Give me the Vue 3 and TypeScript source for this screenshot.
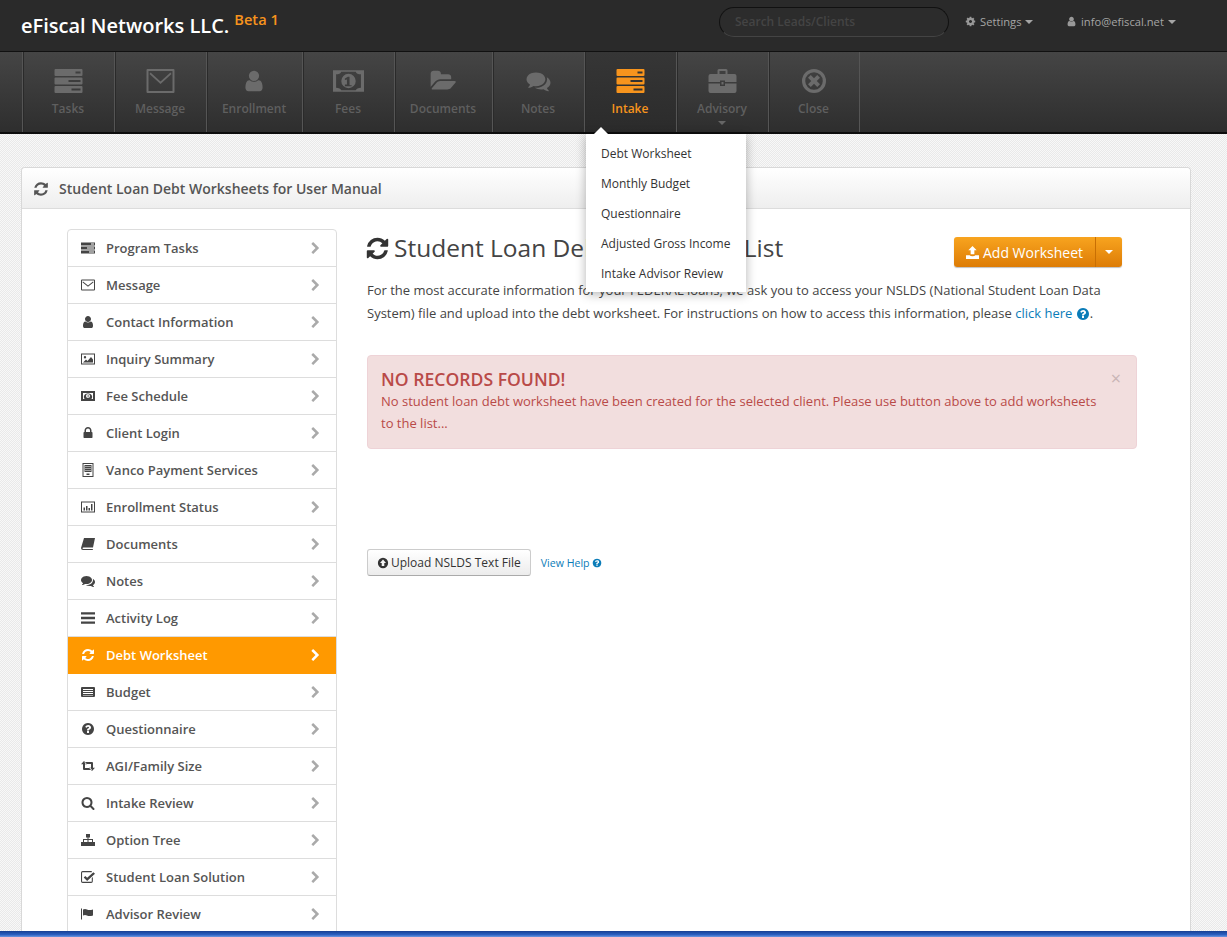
<script setup lang="ts">
interface Glyph { box: string; d: string }

const fa = '0 0 1792 1792'
const refresh = 'M1639 1056q0 5-1 7-64 268-268 434.5t-478 166.5q-146 0-282.5-55t-243.5-157l-129 129q-19 19-45 19t-45-19-19-45v-448q0-26 19-45t45-19h448q26 0 45 19t19 45-19 45l-137 137q71 66 161 102t187 36q134 0 250-65t186-179q11-17 53-117 8-23 30-23h192q13 0 22.5 9.5t9.5 22.5zm25-800v448q0 26-19 45t-45 19h-448q-26 0-45-19t-19-45 19-45l138-138q-148-137-349-137-134 0-250 65t-186 179q-11 17-53 117-8 23-30 23h-199q-13 0-22.5-9.5t-9.5-22.5v-7q65-268 270-434.5t480-166.5q146 0 284 55.5t245 156.5l130-129q19-19 45-19t45 19 19 45z'
const user = 'M1536 1399q0 109-62.5 187t-150.5 78h-854q-88 0-150.5-78t-62.5-187q0-85 8.5-160.5t31.5-152 58.5-131 94-89 134.5-34.5q131 128 313 128t313-128q76 0 134.5 34.5t94 89 58.5 131 31.5 152 8.5 160.5zm-256-887q0 159-112.5 271.5t-271.5 112.5-271.5-112.5-112.5-271.5 112.5-271.5 271.5-112.5 271.5 112.5 112.5 271.5z'
const question = 'M1024 1376v-192q0-14-9-23t-23-9h-192q-14 0-23 9t-9 23v192q0 14 9 23t23 9h192q14 0 23-9t9-23zm256-672q0-88-55.5-163t-138.5-116-170-41q-243 0-371 213-15 24 8 42l132 100q7 6 19 6 16 0 25-12 53-68 86-92 34-24 86-24 48 0 85.5 26t37.5 59q0 38-20 61t-68 45q-63 28-115.5 86.5t-52.5 125.5v36q0 14 9 23t23 9h192q14 0 23-9t9-23q0-19 21.5-49.5t54.5-49.5q32-18 49-28.5t46-35 44.5-48 28-60.5 12.5-81zm384 192q0 209-103 385.5t-279.5 279.5-385.5 103-385.5-103-279.5-279.5-103-385.5 103-385.5 279.5-279.5 385.5-103 385.5 103 279.5 279.5 103 385.5z'

const glyphs: Record<string, Glyph> = {
  server: { box: '0 0 28 24', d: 'M1 0h26a1 1 0 0 1 1 1v5a1 1 0 0 1-1 1H1a1 1 0 0 1-1-1V1a1 1 0 0 1 1-1zM21 2.5v2h5v-2zM1 8.500h26a1 1 0 0 1 1 1v5a1 1 0 0 1-1 1H1a1 1 0 0 1-1-1v-5a1 1 0 0 1 1-1zM14 11v2h12v-2zM1 17h26a1 1 0 0 1 1 1v5a1 1 0 0 1-1 1H1a1 1 0 0 1-1-1v-5a1 1 0 0 1 1-1zM17 19.500v2h9v-2z' },
  envelope: { box: '0 0 28 24', d: 'M1 0h26a1 1 0 0 1 1 1v22a1 1 0 0 1-1 1H1a1 1 0 0 1-1-1V1a1 1 0 0 1 1-1zM2 2v20h24V2zM4 3.500L14 12.500 24 3.500 25 5 14 15 3 5z' },
  user: { box: fa, d: user },
  bill: { box: '0 0 30 21', d: 'M0 0h30v21H0zM3 4v13q4 0 5 2.500h14q1-2.500 5-2.500V4q-4 0-5-2.500H8Q7 4 3 4zM15 3.500a7 7 0 1 1 0 14 7 7 0 0 1 0-14zM14.500 6.500l-3 1.500v1.500l2-.5v5h-2v1.500h6.500V14.500h-2v-8z' },
  folder: { box: '0 0 1920 1792', d: 'M1879 952q0 31-31 66l-336 396q-43 51-120.500 86.500t-143.500 35.500h-1088q-34 0-60.500-13t-26.500-43q0-31 31-66l336-396q43-51 120.500-86.500t143.500-35.500h1088q34 0 60.500 13t26.500 43zm-343-344v160h-832q-94 0-197 47.500t-164 119.500l-337 396-5 6q0-4-.5-12.500t-.5-12.500v-960q0-92 66-158t158-66h320q92 0 158 66t66 158v32h544q92 0 158 66t66 158z' },
  comments: { box: fa, d: 'M1408 768q0 139-94 257t-256.500 186.500-353.500 68.500q-86 0-176-16-124 88-278 128-36 9-86 16h-3q-11 0-20.500-8t-11.500-21q-1-3-1-6.500t.5-6.500 2-6l2.500-5 3.500-5.500 4-5 4.500-5 4-4.500q5-6 23-25t26-29.500 22.500-29 25-38.500 20.500-44q-124-72-195-177t-71-224q0-139 94-257t256.500-186.500 353.500-68.500 353.500 68.500 256.500 186.500 94 257zm384 256q0 120-71 224.500t-195 176.500q10 24 20.500 44t25 38.500 22.500 29 26 29.500 23 25q1 1 4 4.500t4.500 5 4 5 3.500 5.500l2.500 5 2 6 .5 6.500-1 6.500q-3 14-13 22t-22 7q-50-7-86-16-154-40-278-128-90 16-176 16-271 0-472-132 58 4 88 4 161 0 309-45t264-129q125-92 192-212t67-254q0-77-23-152 129 71 204 178t75 230z' },
  briefcase: { box: '0 0 28 24', d: 'M9 5V1.500A1.500 1.500 0 0 1 10.500 0h7A1.500 1.500 0 0 1 19 1.500V5h-2V2h-6v3zM2 5h24a2 2 0 0 1 2 2v6H16.500v-1.500h-5V13H0V7a2 2 0 0 1 2-2zM0 14.500h11.500v2.500h5v-2.500H28V22a2 2 0 0 1-2 2H2a2 2 0 0 1-2-2zM13 13h2v2.500h-2z' },
  closeRing: { box: '0 0 26 26', d: 'M13 0a13 13 0 1 1 0 26 13 13 0 0 1 0-26zM13 3.500a9.500 9.500 0 1 0 0 19 9.500 9.500 0 0 0 0-19zM9.500 6.500L13 10l3.500-3.500 3 3L16 13l3.500 3.500-3 3L13 16l-3.500 3.500-3-3L10 13 6.500 9.500z' },
  refresh: { box: fa, d: refresh },
  chevron: { box: fa, d: 'M1363 877l-742 742q-19 19-45 19t-45-19l-166-166q-19-19-19-45t19-45l531-531-531-531q-19-19-19-45t19-45l166-166q19-19 45-19t45 19l742 742q19 19 19 45t-19 45z' },
  cog: { box: fa, d: 'M1152 896q0-106-75-181t-181-75-181 75-75 181 75 181 181 75 181-75 75-181zm512-109v222q0 12-8 23t-20 13l-185 28q-19 54-39 91 35 50 107 138 10 12 10 25t-9 23q-27 37-99 108t-94 71q-12 0-26-9l-138-108q-44 23-91 38-16 136-29 186-7 28-36 28h-222q-14 0-24.500-8.500t-11.500-21.500l-28-184q-49-16-90-37l-141 107q-10 9-25 9-14 0-25-11-126-114-165-168-7-10-7-23 0-12 8-23 15-21 51-66.500t54-70.500q-27-50-41-99l-183-27q-13-2-21-12.500t-8-23.500v-222q0-12 8-23t19-13l186-28q14-46 39-92-40-57-107-138-10-12-10-24 0-10 9-23 26-36 98.500-107.500t94.500-71.500q13 0 26 10l138 107q44-23 91-38 16-136 29-186 7-28 36-28h222q14 0 24.500 8.500t11.500 21.500l28 184q49 16 90 37l142-107q9-9 24-9 13 0 25 10 129 119 165 170 7 8 7 22 0 12-8 23-15 21-51 66.500t-54 70.500q26 50 41 98l183 28q13 2 21 12.500t8 23.500z' },
  question: { box: fa, d: question },
  lock: { box: fa, d: 'M640 768h512v-192q0-106-75-181t-181-75-181 75-75 181v192zm832 96v576q0 40-28 68t-68 28h-960q-40 0-68-28t-28-68v-576q0-40 28-68t68-28h32v-192q0-184 132-316t316-132 316 132 132 316v192h32q40 0 68 28t28 68z' },
  search: { box: fa, d: 'M1216 832q0-185-131.500-316.500t-316.500-131.500-316.500 131.500-131.500 316.500 131.500 316.500 316.500 131.500 316.500-131.500 131.500-316.500zm512 832q0 52-38 90t-90 38q-54 0-90-38l-343-342q-179 124-399 124-143 0-273.500-55.500t-225-150-150-225-55.500-273.500 55.500-273.500 150-225 225-150 273.500-55.500 273.500 55.500 225 150 150 225 55.500 273.500q0 220-124 399l343 343q37 37 37 90z' },
  tasks: { box: '0 0 14 11', d: 'M0 0h14v3H0zM10 1v1h3V1zM0 4h14v3H0zM6 5v1h7V5zM0 8h14v3H0zM8 9v1h5V9z' },
  mail: { box: '0 0 14 11', d: 'M1 0h12a1 1 0 0 1 1 1v9a1 1 0 0 1-1 1H1a1 1 0 0 1-1-1V1a1 1 0 0 1 1-1zM1 1v9h12V1zM2 2l5 4 5-4 .6.8L7 7.300 1.400 2.800z' },
  picture: { box: '0 0 14 11', d: 'M0 0h14v11H0zM1 1v9h12V1zM2 9l3-3 1.500 1.500L10 3.500 12 6v3zM4 2.500a1.200 1.200 0 1 1 0 2.400 1.200 1.200 0 0 1 0-2.400z' },
  money: { box: '0 0 14 10', d: 'M0 0h14v10H0zM2 2v6h1.500a3.500 3.500 0 0 1 3.500-5.500 3.500 3.500 0 0 1 3.500 5.500H12V2zM7 3a2 2 0 1 1 0 4 2 2 0 0 1 0-4zM6.700 3.800v2.500h.8V3.800z' },
  kiosk: { box: '0 0 11 14', d: 'M0 0h11v14H0zM1 1v12h9V1zM2 2h7v7H2zM3 3v1h1V3zM5 3v1h1V3zM7 3v1h1V3zM3 5v1h1V5zM5 5v1h1V5zM7 5v1h1V5zM3 7v1h1V7zM5 7v1h1V7zM7 7v1h1V7zM4 10.500h3V12H4z' },
  chart: { box: '0 0 14 11', d: 'M0 0h14v11H0zM1 1v9h12V1zM2.500 6h1.500v3H2.500zM5 4.500h1.500V9H5zM7.500 6.500H9V9H7.500zM10 2.500h1.500V9H10z' },
  book: { box: '0 0 14 12', d: 'M3 0h11l-2 9.500H2.500q-1 0-1 .8t1 .7H12l-.3 1H2q-2 0-2-2z' },
  bars: { box: '0 0 12 10', d: 'M0 0h12v2H0zM0 4h12v2H0zM0 8h12v2H0z' },
  budget: { box: '0 0 14 10', d: 'M1 0h12a1 1 0 0 1 1 1v8a1 1 0 0 1-1 1H1a1 1 0 0 1-1-1V1a1 1 0 0 1 1-1zM2 2v1h10V2zM2 4v1h10V4zM2 6v1h10V6zM2 8v.5h10V8z' },
  retweet: { box: '0 0 14 10', d: 'M3 0l3 3.200H4V7h5.500L11 9H3q-1 0-1-1V3.200H0zM3.500 1h7.500q1 0 1 1v4.800h2L11 10 8 6.800h2V3H4.500z' },
  sitemap: { box: '0 0 14 12', d: 'M5 0h4v3.500H7.500V5H12v3h2v4H9V8h2V6H7.500v2H9v4H5V8h1.500V6H3v2h2v4H0V8h2V5h4.500V3.500H5z' },
  check: { box: '0 0 13 11', d: 'M1.500 0H10v1H1.500Q1 1 1 1.500v8q0 .5.5.5h8q.5 0 .5-.5V6.500l1-1v4A1.500 1.500 0 0 1 9.500 11h-8A1.500 1.500 0 0 1 0 9.500v-8A1.500 1.500 0 0 1 1.500 0zM11.500 1L13 2.500 5.700 9.200 2.500 6 4 4.500l1.700 1.700z' },
  flag: { box: '0 0 14 11', d: 'M0 0h1v11H0zM2 1q2-1 4 0t6 0v6q-4 1-6 0t-4 0z' },
  upload: { box: '0 0 14 14', d: 'M7 0l4.500 4.500H9v4.500H5V4.500H2.500zM0 10h4q.5 1 3 1t3-1h4v4H0z' },
  circleUp: { box: fa, d: 'M896 128a768 768 0 1 1 0 1536 768 768 0 0 1 0-1536zM896 384L448 896h256v448h384V896h256z' },
}

const navItems = [
  { label: 'Tasks', icon: 'server', width: 92, w: 29 },
  { label: 'Message', icon: 'envelope', width: 92, w: 29 },
  { label: 'Enrollment', icon: 'user', width: 96, w: 28 },
  { label: 'Fees', icon: 'bill', width: 92, w: 31 },
  { label: 'Documents', icon: 'folder', width: 98, w: 31 },
  { label: 'Notes', icon: 'comments', width: 92, w: 29 },
  { label: 'Intake', icon: 'server', width: 92, w: 29, active: true },
  { label: 'Advisory', icon: 'briefcase', width: 92, w: 29, caret: true },
  { label: 'Close', icon: 'closeRing', width: 92, w: 26 },
]

const intakeLinks = ['Debt Worksheet', 'Monthly Budget', 'Questionnaire', 'Adjusted Gross Income', 'Intake Advisor Review']

const sideItems = [
  { label: 'Program Tasks', icon: 'tasks' },
  { label: 'Message', icon: 'mail' },
  { label: 'Contact Information', icon: 'user' },
  { label: 'Inquiry Summary', icon: 'picture' },
  { label: 'Fee Schedule', icon: 'money' },
  { label: 'Client Login', icon: 'lock' },
  { label: 'Vanco Payment Services', icon: 'kiosk' },
  { label: 'Enrollment Status', icon: 'chart' },
  { label: 'Documents', icon: 'book' },
  { label: 'Notes', icon: 'comments' },
  { label: 'Activity Log', icon: 'bars' },
  { label: 'Debt Worksheet', icon: 'refresh', active: true },
  { label: 'Budget', icon: 'budget' },
  { label: 'Questionnaire', icon: 'question' },
  { label: 'AGI/Family Size', icon: 'retweet' },
  { label: 'Intake Review', icon: 'search' },
  { label: 'Option Tree', icon: 'sitemap' },
  { label: 'Student Loan Solution', icon: 'check' },
  { label: 'Advisor Review', icon: 'flag' },
]
</script>

<template>
  <div class="page">
    <header class="topbar">
      <div class="brand">eFiscal Networks LLC.<sup>Beta 1</sup></div>
      <input class="search" type="text" placeholder="Search Leads/Clients" />
      <a class="top-link settings">
        <svg class="top-icon" :viewBox="glyphs.cog.box"><path :d="glyphs.cog.d" /></svg>
        Settings<i class="caret"></i>
      </a>
      <a class="top-link account">
        <svg class="top-icon" :viewBox="glyphs.user.box"><path :d="glyphs.user.d" /></svg>
        info@efiscal.net<i class="caret"></i>
      </a>
    </header>

    <nav class="mainnav">
      <div
        v-for="item in navItems"
        :key="item.label"
        class="nav-item"
        :class="{ active: item.active }"
        :style="{ width: item.width + 'px' }"
      >
        <svg class="nav-icon" :style="{ width: item.w + 'px' }" :viewBox="glyphs[item.icon].box"><path fill-rule="evenodd" :d="glyphs[item.icon].d" /></svg>
        <span>{{ item.label }}</span>
        <i v-if="item.caret" class="nav-caret"></i>
        <div v-if="item.active" class="dropdown">
          <a v-for="link in intakeLinks" :key="link">{{ link }}</a>
        </div>
      </div>
    </nav>

    <main class="content">
      <section class="card">
        <div class="card-head">
          <svg class="head-icon" :viewBox="glyphs.refresh.box"><path :d="glyphs.refresh.d" /></svg>
          Student Loan Debt Worksheets for User Manual
        </div>
        <div class="card-body">
          <ul class="sidemenu">
            <li v-for="item in sideItems" :key="item.label" :class="{ active: item.active }">
              <span class="side-icon"><svg :viewBox="glyphs[item.icon].box"><path fill-rule="evenodd" :d="glyphs[item.icon].d" /></svg></span>
              <span class="side-label">{{ item.label }}</span>
              <svg class="chevron" :viewBox="glyphs.chevron.box"><path :d="glyphs.chevron.d" /></svg>
            </li>
          </ul>

          <div class="detail">
            <div class="title-row">
              <h1>
                <svg class="title-icon" :viewBox="glyphs.refresh.box"><path :d="glyphs.refresh.d" /></svg>
                Student Loan Debt Worksheet List
              </h1>
              <div class="split-btn">
                <button type="button" class="add-btn">
                  <svg :viewBox="glyphs.upload.box"><path :d="glyphs.upload.d" /></svg>
                  Add Worksheet
                </button>
                <button type="button" class="add-caret"><i class="caret"></i></button>
              </div>
            </div>
            <p class="intro">
              For the most accurate information for your FEDERAL loans, we ask you to access your NSLDS (National Student Loan Data System) file and upload into the debt worksheet. For instructions on how to access this information, please
              <a>click here <svg class="help" :viewBox="glyphs.question.box"><path :d="glyphs.question.d" /></svg></a>.
            </p>
            <div class="alert">
              <span class="alert-close">×</span>
              <h4>NO RECORDS FOUND!</h4>
              <p>No student loan debt worksheet have been created for the selected client. Please use button above to add worksheets to the list...</p>
            </div>
            <div class="upload-row">
              <button type="button" class="upload-btn">
                <svg :viewBox="glyphs.circleUp.box"><path fill-rule="evenodd" :d="glyphs.circleUp.d" /></svg>
                Upload NSLDS Text File
              </button>
              <a class="view-help">View Help <svg :viewBox="glyphs.question.box"><path :d="glyphs.question.d" /></svg></a>
            </div>
          </div>
        </div>
      </section>
    </main>

    <div class="taskbar"></div>
  </div>
</template>

<style>
html, body { margin: 0; overflow: hidden; }
</style>

<style scoped>
.page {
  display: flex;
  flex-direction: column;
  height: 937px;
  overflow: hidden;
  font-family: "Open Sans", sans-serif;
  color: #444;
  background-color: #f8f8f8;
  background-image:
    linear-gradient(45deg, #e9e9e9 25%, transparent 25%, transparent 75%, #e9e9e9 75%),
    linear-gradient(45deg, #e9e9e9 25%, transparent 25%, transparent 75%, #e9e9e9 75%);
  background-size: 2px 2px;
  background-position: 0 0, 1px 1px;
}

.topbar {
  flex: none;
  display: flex;
  align-items: center;
  height: 52px;
  padding-left: 21px;
  box-sizing: border-box;
  background: #2a2a2a;
  border-bottom: 1px solid #111;
}

.brand {
  width: 698px;
  font-size: 20px;
  font-weight: 600;
  color: #fff;
  white-space: nowrap;
}

.brand sup {
  margin-left: 5px;
  font-size: 14.6px;
  font-weight: 600;
  color: #f7941d;
  line-height: 0;
  vertical-align: 8px;
}

.search {
  width: 230px;
  height: 30px;
  box-sizing: border-box;
  margin-top: -8px;
  padding: 0 15px;
  border: 1px solid #111;
  border-bottom-color: #444;
  border-radius: 15px;
  background: #2c2c2c;
  font: 600 12px "Open Sans", sans-serif;
  outline: none;
}

.search::placeholder { color: #444; opacity: 1; }

.top-link {
  display: flex;
  align-items: center;
  margin-top: -8px;
  font-size: 11.2px;
  color: #a5a5a5;
}

.settings { margin-left: 17px; width: 101px; }

.top-icon {
  width: 11px;
  height: 11px;
  margin: 0 4px 0 -1px;
  fill: #999;
}

.caret {
  display: inline-block;
  margin-left: 4px;
  border-left: 4px solid transparent;
  border-right: 4px solid transparent;
  border-top: 4px solid #a5a5a5;
}

.mainnav {
  flex: none;
  position: relative;
  z-index: 5;
  display: flex;
  height: 82px;
  padding-left: 22px;
  box-sizing: border-box;
  background: linear-gradient(#454545, #2e2e2e);
  border-bottom: 2px solid #0d0d0d;
}

.nav-item {
  position: relative;
  display: flex;
  flex-direction: column;
  align-items: center;
  box-sizing: border-box;
  padding: 17px 1px 0 0;
  border-left: 1px solid #555;
  box-shadow: inset 1px 0 0 #2a2a2a;
  font-size: 12px;
  font-weight: 600;
  color: #5f5f5f;
}

.nav-item:last-child { border-right: 1px solid #555; }

.nav-item.active {
  background: linear-gradient(#363636, #2b2b2b);
  color: #f7941d;
}

.nav-icon {
  height: 24px;
  margin-bottom: 7px;
  fill: #6b6b6b;
}

.nav-item.active .nav-icon { fill: #f7941d; }

.nav-caret {
  margin-top: 4px;
  border-left: 4px solid transparent;
  border-right: 4px solid transparent;
  border-top: 4px solid #666;
}

.dropdown {
  position: absolute;
  top: 82px;
  left: 1px;
  width: 160px;
  padding: 5px 0 3px;
  box-sizing: border-box;
  background: #fff;
  box-shadow: 0 2px 10px rgba(0, 0, 0, 0.3);
  font-size: 12px;
  font-weight: 400;
  color: #333;
}

.dropdown::before {
  content: "";
  position: absolute;
  top: -7px;
  left: 8px;
  border-left: 7px solid transparent;
  border-right: 7px solid transparent;
  border-bottom: 7px solid #fff;
}

.dropdown a {
  display: block;
  height: 30px;
  padding-left: 15px;
  line-height: 29px;
  white-space: nowrap;
}

.content {
  flex: 1;
  min-height: 0;
  padding: 33px 36px 0 21px;
  overflow: hidden;
}

.card {
  height: 100%;
  box-sizing: border-box;
  border: 1px solid #d8d8d8;
  border-bottom: none;
  border-radius: 4px 4px 0 0;
  background: #fff;
}

.card-head {
  display: flex;
  align-items: center;
  height: 41px;
  box-sizing: border-box;
  padding: 1px 0 0 11px;
  border-bottom: 1px solid #dcdcdc;
  background: linear-gradient(#fff, #eee);
  border-radius: 4px 4px 0 0;
  font-size: 14px;
  font-weight: 600;
  color: #555;
}

.head-icon {
  width: 16px;
  height: 16px;
  margin-right: 10px;
  fill: #555;
}

.card-body {
  display: flex;
  padding: 20px 53px 0 45px;
}

.sidemenu {
  flex: none;
  width: 270px;
  margin: 0;
  padding: 0;
  box-sizing: border-box;
  border: 1px solid #ddd;
  border-radius: 4px 4px 0 0;
  list-style: none;
  background: #fff;
}

.sidemenu li {
  display: flex;
  align-items: center;
  height: 37px;
  box-sizing: border-box;
  padding: 0 14px 0 13px;
  border-bottom: 1px solid #ddd;
  font-size: 13px;
  font-weight: 600;
  color: #555;
}

.sidemenu li.active {
  background: #f90;
  border-bottom-color: #f90;
  color: #fff;
}

.side-icon {
  display: flex;
  justify-content: center;
  width: 14px;
  margin-right: 11px;
}

.side-icon svg {
  width: 14px;
  height: 14px;
  fill: #444;
}

.active .side-icon svg { fill: #fff; }

.side-label { flex: 1; }

.chevron {
  width: 13px;
  height: 13px;
  fill: #aaa;
}

.active .chevron { fill: #fff; }

.detail {
  flex: 1;
  min-width: 0;
  margin-left: 30px;
}

.title-row {
  display: flex;
  justify-content: space-between;
  align-items: flex-start;
  padding-top: 3px;
}

h1 {
  display: flex;
  align-items: center;
  margin: 0;
  font-size: 24.5px;
  font-weight: 400;
  line-height: 32px;
  color: #444;
}

.title-icon {
  width: 25px;
  height: 25px;
  margin: 0 4px 0 -2px;
  fill: #333;
}

.split-btn {
  display: flex;
  height: 30px;
  margin: 5px 15px 0 0;
  border-radius: 3px;
  box-shadow: 0 1px 1px rgba(0, 0, 0, 0.25);
  background: linear-gradient(#f8a41f, #dd7c06);
}

.split-btn button {
  display: flex;
  align-items: center;
  border: none;
  background: none;
  color: #fff;
  font: 400 14px "Open Sans", sans-serif;
}

.add-btn {
  width: 142px;
  padding: 0 0 0 12px;
  border-right: 1px solid #c86f04 !important;
}

.add-btn svg {
  width: 13px;
  height: 13px;
  margin-right: 4px;
  fill: #fff;
}

.add-caret {
  width: 26px;
  justify-content: center;
  padding: 0;
}

.add-caret .caret { margin: 0; border-top-color: #fff; }

.intro {
  margin: 12px 0 0;
  font-size: 13px;
  line-height: 23px;
  color: #444;
}

.intro a { color: #0a7cb8; }

.help {
  width: 14px;
  height: 14px;
  vertical-align: -3px;
  fill: #0a7cb8;
}

.alert {
  position: relative;
  margin-top: 30px;
  padding: 12px 30px 14px 13px;
  border: 1px solid #eed3d7;
  border-radius: 4px;
  background: #f2dede;
  color: #b94a48;
}

.alert h4 {
  margin: 0;
  font-size: 17.6px;
  font-weight: 600;
  line-height: 22px;
}

.alert p {
  margin: 0;
  font-size: 13px;
  line-height: 22px;
}

.alert-close {
  position: absolute;
  top: 10px;
  right: 15px;
  font-size: 18px;
  line-height: 24px;
  color: #c9b5b5;
}

.upload-row {
  display: flex;
  align-items: center;
  margin-top: 100px;
}

.upload-btn {
  display: flex;
  align-items: center;
  height: 27px;
  padding: 0 9px;
  border: 1px solid #ccc;
  border-bottom-color: #aaa;
  border-radius: 3px;
  background: linear-gradient(#fff, #ececec);
  font: 400 12px "Open Sans", sans-serif;
  color: #333;
}

.upload-btn svg {
  width: 12px;
  height: 12px;
  margin-right: 2px;
  fill: #333;
}

.view-help {
  display: flex;
  align-items: center;
  margin-left: 10px;
  font-size: 10.6px;
  color: #0a7cb8;
  white-space: pre;
}

.view-help svg {
  width: 10px;
  height: 10px;
  fill: #0a7cb8;
}

.taskbar {
  flex: none;
  height: 6px;
  background: linear-gradient(#173f92 0, #2a5fc0 60%, #6c97e0 100%);
}
</style>
